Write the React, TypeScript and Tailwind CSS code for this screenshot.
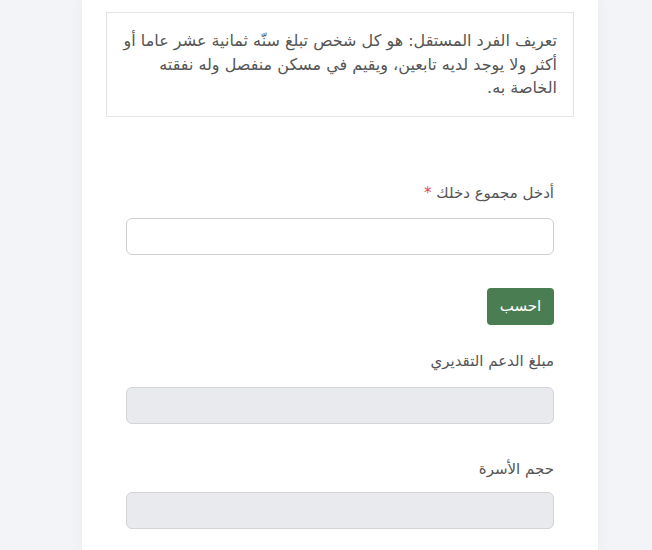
export default function App() {
  return (
    <div
      dir="rtl"
      className="min-h-[550px] bg-[#f3f4f8] text-[#555] font-['DejaVu_Sans',sans-serif]"
    >
      <div className="mr-[54px] w-[516px] min-h-[550px] bg-white shadow-[0_0_12px_rgba(0,0,0,0.05)] px-6 pt-3">
        {/* definition note */}
        <div className="border border-[#e2e2e2] pr-[16px] pl-[14px] py-[16px] text-[16px] leading-[23.5px]">
          تعريف الفرد المستقل: هو كل شخص تبلغ سنّه ثمانية عشر عاما أو أكثر ولا يوجد لديه تابعين، ويقيم في مسكن منفصل وله نفقته الخاصة به.
        </div>

        <div className="px-[20px] pt-[65px]">
          <label className="block text-[15px] mb-[14px]">
            أدخل مجموع دخلك <span className="text-[#e24a4a]">*</span>
          </label>
          <input
            type="text"
            className="block w-full h-[37px] rounded-md border border-[#cfcfcf] bg-white"
          />

          <button className="mt-[33px] h-[37px] w-[67px] rounded bg-[#4b7d52] text-white text-[15px]">
            احسب
          </button>

          <label className="block text-[15px] mt-[25px] mb-[14px]">
            مبلغ الدعم التقديري
          </label>
          <input
            type="text"
            disabled
            className="block w-full h-[37px] rounded-md border border-[#d4d4d6] bg-[#e9eaee]"
          />

          <label className="block text-[15px] mt-[34px] mb-[12px]">
            حجم الأسرة
          </label>
          <input
            type="text"
            disabled
            className="block w-full h-[37px] rounded-md border border-[#d4d4d6] bg-[#e9eaee]"
          />
        </div>
      </div>
    </div>
  );
}
